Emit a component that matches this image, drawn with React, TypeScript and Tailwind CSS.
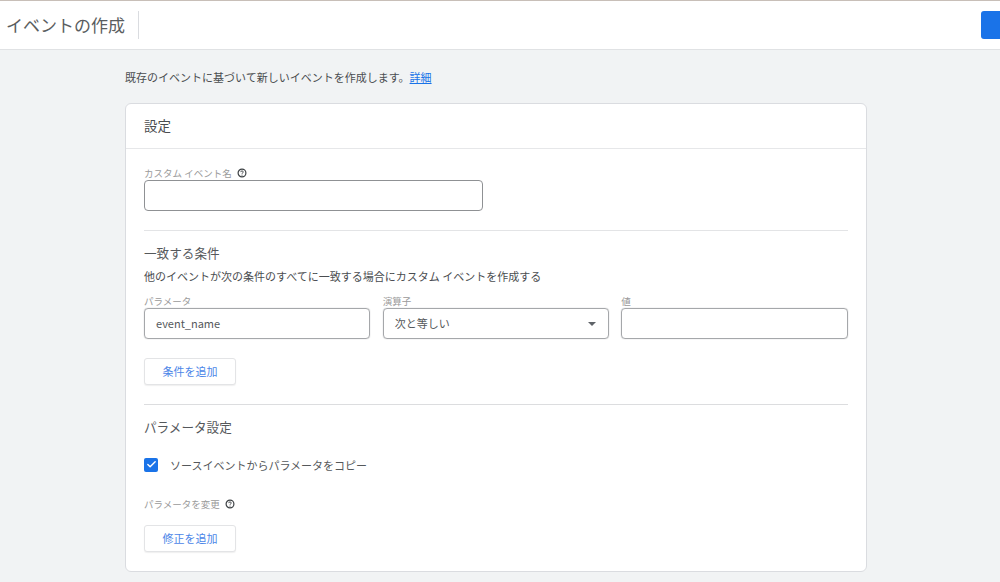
import React from 'react';
import { Check } from 'lucide-react';

const font = "font-['Noto_Sans_CJK_JP','Noto_Sans',sans-serif]";

function HelpIcon() {
  return (
    <svg width="10" height="10" viewBox="0 0 10 10" fill="none" className="shrink-0">
      <circle cx="5" cy="5" r="3.9" stroke="#3c4043" strokeWidth="1.2" />
      <path d="M3.7 4.1c0-.8.6-1.2 1.3-1.2s1.3.4 1.3 1.1c0 .9-1.3.9-1.3 1.8" stroke="#3c4043" strokeWidth="0.9" />
      <circle cx="5" cy="7.1" r="0.55" fill="#3c4043" />
    </svg>
  );
}

function FieldLabel({ text }: { text: string }) {
  return <div className="h-[14px] text-[9.5px] leading-[14px] text-[#9a9a9a] whitespace-nowrap">{text}</div>;
}

function OutlineButton({ text }: { text: string }) {
  return (
    <button className="w-[92px] h-[27px] rounded-[3px] border border-[#e3e4e6] bg-white text-[11px] text-[#4c86e8] shadow-[0_1px_1px_rgba(60,64,67,0.08)]">
      {text}
    </button>
  );
}

export default function App() {
  return (
    <div className={`h-[582px] overflow-hidden bg-[#f1f3f4] text-[#4a4d50] ${font}`}>
      {/* Header */}
      <div className="h-[50px] bg-white border-t border-t-[#c8bfb8] border-b border-b-[#e0e2e4] flex items-center justify-between overflow-hidden">
        <div className="flex items-center h-[28px]">
          <h1 className="pl-[6px] w-[139px] text-[17px] leading-[28px] font-normal text-[#5a5d60] whitespace-nowrap border-r border-[#dadce0]">
            イベントの作成
          </h1>
        </div>
        <div className="w-[19px] h-[28px] bg-[#1a73e8] rounded-l-[3px]"></div>
      </div>

      <div className="pl-[125px] w-[867px]">
        <p className="mt-[19px] h-[16px] text-[11px] leading-[16px] text-[#4a4d50] whitespace-nowrap">
          既存のイベントに基づいて新しいイベントを作成します。
          <a className="text-[#1a73e8] underline">詳細</a>
        </p>

        {/* Card */}
        <div className="mt-[18px] h-[469px] bg-white rounded-[6px] border border-[#dadce0]">
          <div className="h-[45px] pl-[18px] pb-[2px] flex items-center border-b border-[#e6e7e9] text-[13.5px] text-[#4a4d50]">
            設定
          </div>

          <div className="pl-[18px] pr-[18.5px]">
            <div className="mt-[17px] flex items-center gap-[5px] h-[14px] text-[#9a9a9a]">
              <span className="text-[9.5px] leading-[14px] whitespace-nowrap">カスタム イベント名</span>
              <HelpIcon />
            </div>
            <div className="w-[339px] h-[31px] rounded-[4px] border border-[#8f9194] bg-white"></div>

            <div className="mt-[19px] border-t border-[#e3e4e6]"></div>

            <h2 className="mt-[12px] h-[20px] text-[12.6px] leading-[20px] font-normal text-[#55585b]">一致する条件</h2>
            <p className="mt-[5px] h-[16px] text-[11px] leading-[16px] text-[#4a4d50] whitespace-nowrap">
              他のイベントが次の条件のすべてに一致する場合にカスタム イベントを作成する
            </p>

            <div className="mt-[10px] grid grid-cols-3 gap-x-[12.5px]">
              <div>
                <FieldLabel text="パラメータ" />
                <div className="h-[31px] pl-[11px] flex items-center rounded-[4px] border border-[#a5a7aa] shadow-[0_0_1px_#a5a7aa] text-[11px] text-[#55585b]">
                  event_name
                </div>
              </div>
              <div>
                <FieldLabel text="演算子" />
                <div className="h-[31px] pl-[11px] pr-[12px] flex items-center justify-between rounded-[4px] border border-[#a5a7aa] shadow-[0_0_1px_#a5a7aa] text-[11px] text-[#55585b]">
                  次と等しい
                  <span className="w-0 h-0 border-x-[4px] border-x-transparent border-t-[4px] border-t-[#5f6368]"></span>
                </div>
              </div>
              <div>
                <FieldLabel text="値" />
                <div className="h-[31px] rounded-[4px] border border-[#a5a7aa] shadow-[0_0_1px_#a5a7aa]"></div>
              </div>
            </div>

            <div className="mt-[18px]">
              <OutlineButton text="条件を追加" />
            </div>

            <div className="mt-[19px] border-t border-[#dcdddf]"></div>

            <h2 className="mt-[12px] h-[20px] text-[12.6px] leading-[20px] font-normal text-[#55585b]">パラメータ設定</h2>

            <div className="mt-[21px] flex items-center gap-[12px] h-[14px]">
              <span className="w-[14px] h-[14px] rounded-[2px] bg-[#1a73e8] flex items-center justify-center">
                <Check size={11} strokeWidth={3} color="#ffffff" />
              </span>
              <span className="text-[11px] text-[#55585b] whitespace-nowrap">ソースイベントからパラメータをコピー</span>
            </div>

            <div className="mt-[25px] flex items-center gap-[5px] h-[14px] text-[#9a9a9a]">
              <span className="text-[9.5px] leading-[14px] whitespace-nowrap">パラメータを変更</span>
              <HelpIcon />
            </div>

            <div className="mt-[13px]">
              <OutlineButton text="修正を追加" />
            </div>
          </div>
        </div>
      </div>
    </div>
  );
}
